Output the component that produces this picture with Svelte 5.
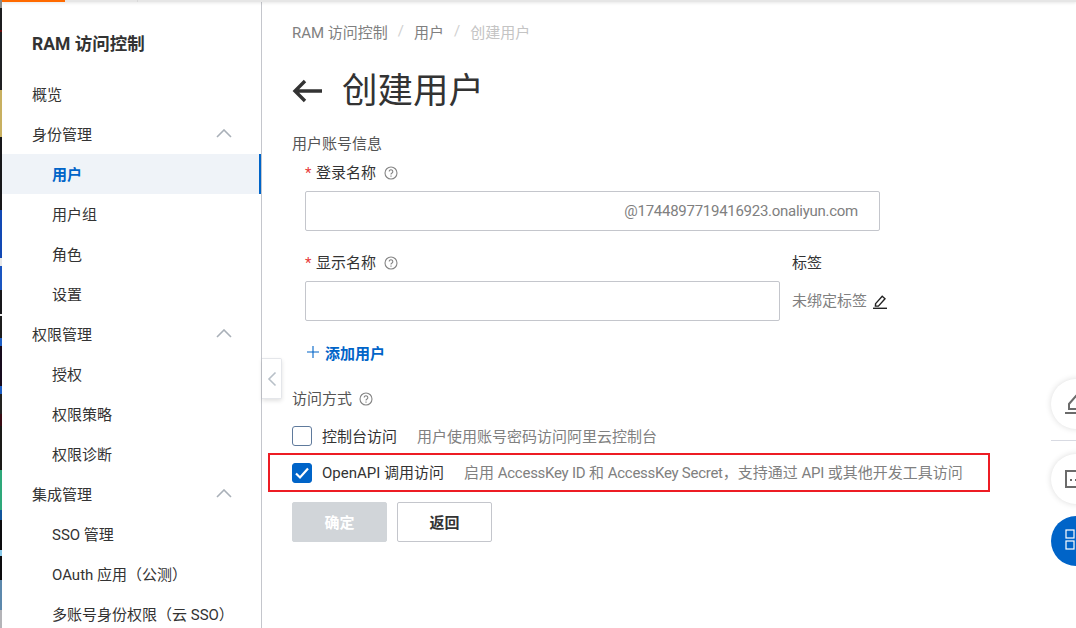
<script lang="ts">
  type NavItem = { label: string; level: number; active?: boolean; arrow?: boolean };

  const strip = [
    { h: 8, c: '#8a8a88' }, { h: 22, c: '#1c1c1e' }, { h: 2, c: '#6f0d0d' }, { h: 58, c: '#202022' },
    { h: 47, c: '#c8b060' }, { h: 73, c: '#17171a' }, { h: 48, c: '#1248b4' }, { h: 8, c: '#e8e8e8' }, { h: 24, c: '#1a55c0' },
    { h: 24, c: '#17171a' }, { h: 2, c: '#eeeeee' }, { h: 22, c: '#1c1c1c' }, { h: 8, c: '#1c5dc4' }, { h: 40, c: '#170a1c' },
    { h: 8, c: '#1c5dc4' }, { h: 20, c: '#222220' }, { h: 12, c: '#3a0c14' }, { h: 44, c: '#1a1a18' }, { h: 40, c: '#2ea87a' },
    { h: 10, c: '#11559c' }, { h: 30, c: '#0c0c0e' }, { h: 6, c: '#88c8e8' }, { h: 24, c: '#0c0c0e' }, { h: 30, c: '#5c88ac' }, { h: 18, c: '#b4b4b8' }
  ];

  const nav: NavItem[] = [
    { label: '概览', level: 0 },
    { label: '身份管理', level: 0, arrow: true },
    { label: '用户', level: 1, active: true },
    { label: '用户组', level: 1 },
    { label: '角色', level: 1 },
    { label: '设置', level: 1 },
    { label: '权限管理', level: 0, arrow: true },
    { label: '授权', level: 1 },
    { label: '权限策略', level: 1 },
    { label: '权限诊断', level: 1 },
    { label: '集成管理', level: 0, arrow: true },
    { label: 'SSO 管理', level: 1 },
    { label: 'OAuth 应用（公测）', level: 1 },
    { label: '多账号身份权限（云 SSO）', level: 1 }
  ];
</script>

{#snippet help()}
  <svg class="help" width="14" height="14" viewBox="0 0 14 14" fill="none" stroke="#858585" stroke-width="1.1">
    <circle cx="7" cy="7" r="6" />
    <path d="M5.2 5.6a1.8 1.8 0 1 1 2.8 1.5c-.7.4-1 .8-1 1.5" />
    <path d="M7 9.6v1.1" />
  </svg>
{/snippet}

<div class="page">
  <div class="strip">
    {#each strip as s}
      <i style="height:{s.h}px;background:{s.c}"></i>
    {/each}
  </div>

  <div class="window">
    <div class="topbar"><span class="accent"></span><span class="tick"></span></div>

    <div class="body">
      <aside class="sidebar">
        <h1 class="product">RAM 访问控制</h1>
        <ul class="nav">
          {#each nav as item}
            <li class="nav-item" class:sub={item.level === 1} class:active={item.active}>
              <span>{item.label}</span>
              {#if item.arrow}
                <svg class="chev" width="16" height="9" viewBox="0 0 16 9" fill="none" stroke="#a9b0b8" stroke-width="1.6"><path d="M1 8l7-7 7 7" /></svg>
              {/if}
            </li>
          {/each}
        </ul>
      </aside>

      <main class="content">
        <button class="collapse" aria-label="收起">
          <svg width="10" height="16" viewBox="0 0 10 16" fill="none" stroke="#b8c0c8" stroke-width="1.6"><path d="M8.5 1.5L2 8l6.5 6.5" /></svg>
        </button>

        <nav class="crumbs">
          <span>RAM 访问控制</span><em>/</em><span>用户</span><em>/</em><span class="current">创建用户</span>
        </nav>

        <div class="title">
          <svg width="32" height="26" viewBox="0 0 32 26" fill="none" stroke="#333" stroke-width="3.4"><path d="M30 13H3M13 3L3 13l10 10" /></svg>
          <h2>创建用户</h2>
        </div>

        <div class="section-label">用户账号信息</div>

        <div class="field-label first"><b>*</b>登录名称 {@render help()}</div>
        <div class="input wide"><span class="suffix">@1744897719416923.onaliyun.com</span></div>

        <div class="row">
          <div class="col-name">
            <div class="field-label"><b>*</b>显示名称 {@render help()}</div>
            <div class="input"></div>
          </div>
          <div class="col-tag">
            <div class="tag-title">标签</div>
            <div class="tag-value">
              未绑定标签
              <svg width="16" height="16" viewBox="0 0 16 16" fill="none" stroke="#222" stroke-width="1.4">
                <path d="M3.6 10.6l6.6-7.4 2.8 2.5-6.6 7.4H3.4z" />
                <path d="M1 15.3h14" />
              </svg>
            </div>
          </div>
        </div>

        <div class="add-user">
          <svg width="12" height="12" viewBox="0 0 12 12" stroke="#0064c8" stroke-width="1.1"><path d="M6 0v12M0 6h12" /></svg>
          <span>添加用户</span>
        </div>

        <div class="section-label access">访问方式 {@render help()}</div>

        <div class="option">
          <span class="box"></span>
          <span class="opt-name">控制台访问</span>
          <span class="opt-desc">用户使用账号密码访问阿里云控制台</span>
        </div>
        <div class="option marked">
          <span class="box checked">
            <svg width="16" height="14" viewBox="0 0 16 14" fill="none" stroke="#fff" stroke-width="2.2"><path d="M2 7.5l4 4 8-9" /></svg>
          </span>
          <span class="opt-name">OpenAPI 调用访问</span>
          <span class="opt-desc">启用 <span class="lat">AccessKey ID</span> 和 <span class="lat">AccessKey Secret</span>，支持通过 <span class="lat">API</span> 或其他开发工具访问</span>
        </div>

        <div class="actions">
          <button class="btn primary" disabled>确定</button>
          <button class="btn">返回</button>
        </div>

        <div class="float">
          <div class="round">
            <svg width="24" height="24" viewBox="0 0 24 24" fill="none" stroke="#6b6b6b" stroke-width="2">
              <path d="M5 17v-5l7-8 7 6-6 7z" />
              <path d="M1 21h22" />
            </svg>
          </div>
          <div class="divider"></div>
          <div class="round">
            <svg width="24" height="24" viewBox="0 0 24 24" fill="none" stroke="#6b6b6b" stroke-width="2">
              <path d="M22 4H2v16h12l4 3v-3h4z" />
              <path d="M7 12v2M12 12v2" />
            </svg>
          </div>
          <div class="round blue">
            <svg width="24" height="24" viewBox="0 0 24 24" fill="none" stroke="#fff" stroke-width="1.2">
              <rect x="1" y="1" width="8" height="8" />
              <rect x="1" y="12" width="8" height="8" />
              <rect x="12" y="1" width="8" height="8" />
              <rect x="12" y="12" width="8" height="8" />
            </svg>
          </div>
        </div>
      </main>
    </div>
  </div>
</div>

<style>
:global(body) {
  margin: 0;
  background: #fff;
}
.page {
  display: flex;
  width: 1076px;
  height: 628px;
  overflow: hidden;
  font-family: Roboto, "Noto Sans CJK SC", sans-serif;
  font-size: 15px;
  color: #333;
}
.strip {
  width: 2px;
  flex: none;
  display: flex;
  flex-direction: column;
}
.strip i {
  display: block;
}
.window {
  flex: 1;
  min-width: 0;
  display: flex;
  flex-direction: column;
}
.topbar {
  height: 2px;
  flex: none;
  display: flex;
  background: #e6e6e6;
  box-shadow: 0 1px 3px rgba(0,0,0,0.12);
  position: relative;
  z-index: 2;
}
.accent {
  width: 63px;
  background: #ff6a00;
}
.tick {
  margin-left: 72px;
  width: 1px;
  background: #d8d8d8;
}
.body {
  flex: 1;
  display: flex;
  min-height: 0;
}
.sidebar {
  width: 260px;
  flex: none;
  box-sizing: border-box;
  border-right: 1px solid #c4c6cc;
  overflow: hidden;
}
.product {
  margin: 0;
  padding: 30px 0 0 30px;
  height: 42px;
  font-size: 17.5px;
  line-height: 24px;
  font-weight: 700;
  color: #333;
  white-space: nowrap;
}
.nav {
  list-style: none;
  margin: 0;
  padding: 0;
}
.nav-item {
  height: 40px;
  display: flex;
  align-items: center;
  justify-content: space-between;
  padding: 0 29px 2px 30px;
  box-sizing: border-box;
  color: #333;
  white-space: nowrap;
}
.nav-item.sub {
  padding-left: 50px;
}
.nav-item.active {
  background: #eff3f8;
  color: #0064c8;
  font-weight: 700;
  border-right: 2px solid #0064c8;
}
.chev {
  margin-top: 1px;
}
.content {
  flex: 1;
  min-width: 0;
  padding: 19px 0 0 30px;
  position: relative;
}
.collapse {
  position: absolute;
  left: 0;
  top: 356px;
  width: 20px;
  height: 41px;
  padding: 0;
  border: 1px solid #e4e6ea;
  border-left: 0;
  border-radius: 0 2px 2px 0;
  background: #fff;
  box-shadow: 0 2px 4px rgba(0,0,0,0.12);
  display: flex;
  align-items: center;
  justify-content: center;
}
.crumbs {
  display: flex;
  align-items: center;
  height: 20px;
  color: #808080;
}
.crumbs em {
  font-style: normal;
  color: #d0d0d0;
  margin: 0 10px;
}
.crumbs .current {
  color: #c4c4c4;
}
.title {
  display: flex;
  align-items: center;
  height: 46px;
  margin-top: 27px;
  gap: 18px;
}
.title h2 {
  margin: 0;
  font-size: 35.5px;
  line-height: 46px;
  font-weight: 400;
  color: #333;
}
.section-label {
  margin-top: 20px;
  height: 20px;
  line-height: 20px;
  color: #555;
  display: flex;
  align-items: center;
  gap: 7px;
}
.field-label {
  height: 20px;
  line-height: 20px;
  display: flex;
  align-items: center;
  padding-left: 13px;
  color: #333;
}
.field-label.first {
  margin-top: 9px;
}
.field-label b {
  color: #e83a3a;
  font-weight: 400;
  margin-right: 4px;
  width: 7px;
}
.help {
  margin-left: 8px;
}
.section-label .help {
  margin-left: 0;
}
.input {
  height: 40px;
  box-sizing: border-box;
  border: 1px solid #c4c6cc;
  border-radius: 2px;
  margin: 8px 0 0 13px;
  width: 475px;
  display: flex;
  align-items: center;
  justify-content: flex-end;
}
.input.wide {
  width: 575px;
}
.suffix {
  color: #808080;
  padding-right: 21px;
  white-space: nowrap;
  letter-spacing: -0.27px;
}
.lat {
  letter-spacing: -0.27px;
}
.row {
  display: flex;
  margin-top: 22px;
}
.col-tag {
  margin-left: 12px;
}
.tag-title {
  height: 20px;
  line-height: 20px;
}
.tag-value {
  margin-top: 18px;
  height: 20px;
  line-height: 20px;
  display: flex;
  align-items: center;
  gap: 5px;
  color: #808080;
}
.add-user {
  margin: 21px 0 0 15px;
  height: 20px;
  display: flex;
  align-items: center;
  gap: 6px;
  color: #0064c8;
  font-weight: 700;
}
.section-label.access {
  margin-top: 27px;
}
.option {
  display: flex;
  align-items: center;
  height: 38px;
  white-space: nowrap;
}
.access + .option {
  margin-top: 10px;
  height: 34px;
}
.box {
  width: 20px;
  height: 20px;
  box-sizing: border-box;
  border: 1px solid #5f7a9c;
  border-radius: 3px;
  flex: none;
  margin-right: 10px;
  display: flex;
  align-items: center;
  justify-content: center;
}
.box.checked {
  background: #0064c8;
  border-color: #0064c8;
}
.opt-name {
  color: #333;
  margin-bottom: 2px;
}
.opt-desc {
  color: #808080;
  margin-left: 20px;
  margin-bottom: 2px;
}
.option.marked {
  width: 722px;
  box-sizing: border-box;
  height: 39px;
  margin-left: -24px;
  padding-left: 22px;
  border: 2px solid #ed1c24;
}
.actions {
  display: flex;
  gap: 10px;
  margin-top: 10px;
}
.btn {
  width: 95px;
  height: 40px;
  box-sizing: border-box;
  border: 1px solid #c4c6cc;
  border-radius: 2px;
  background: #fff;
  color: #333;
  font-family: inherit;
  font-size: 15px;
  font-weight: 700;
  padding: 0 0 2px;
}
.btn.primary {
  background: #d1d5d9;
  border-color: #d1d5d9;
  color: #fff;
}
.float {
  position: absolute;
  top: 377px;
  left: 789px;
  width: 60px;
  display: flex;
  flex-direction: column;
  align-items: flex-start;
}
.round {
  width: 50px;
  height: 50px;
  border-radius: 50%;
  background: #fff;
  box-shadow: 0 0 6px rgba(0,0,0,0.14);
  display: flex;
  align-items: center;
  padding-left: 13px;
  box-sizing: border-box;
  flex: none;
}
.divider {
  width: 60px;
  height: 1px;
  background: #d8dae2;
  margin: 11px 0 13px;
}
.round.blue {
  background: #0064c8;
  margin-top: 12px;
  padding-left: 14px;
  box-shadow: none;
}
</style>
